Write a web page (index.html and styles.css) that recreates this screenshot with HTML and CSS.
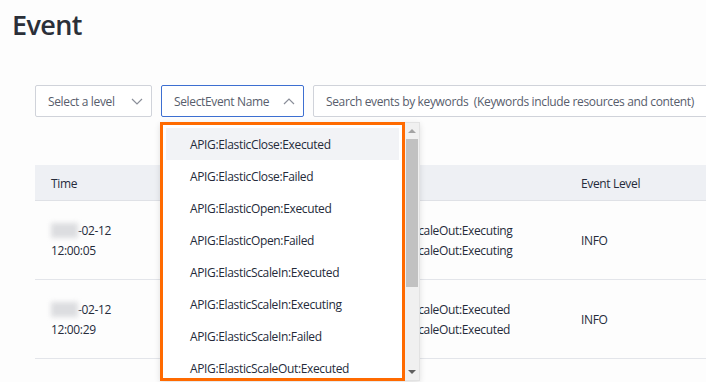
FILE: index.html
```html
<!DOCTYPE html>
<html lang="en">
<head>
    <meta charset="UTF-8">
    <title>Event</title>
    <link rel="stylesheet" href="styles.css">
</head>
<body>
    <div class="page">
        <h1>Event</h1>

        <div class="filters">
            <div class="select level">
                <span>Select a level</span>
                <svg class="chevron" width="12" height="7" viewBox="0 0 12 7"><path d="M1 1 L6 6 L11 1" fill="none" stroke="#8a8e99" stroke-width="1.2"/></svg>
            </div>
            <div class="select name active">
                <span>SelectEvent Name</span>
                <svg class="chevron" width="12" height="7" viewBox="0 0 12 7"><path d="M1 6 L6 1 L11 6" fill="none" stroke="#8a8e99" stroke-width="1.2"/></svg>
            </div>
            <div class="search">Search events by keywords&nbsp; (Keywords include resources and content)</div>
        </div>

        <div class="table">
            <div class="row head">
                <div class="cell">Time</div>
                <div class="cell">Event Name</div>
                <div class="cell">Event Level</div>
            </div>
            <div class="row">
                <div class="cell"><span class="blur"></span>-02-12<br>12:00:05</div>
                <div class="cell">APIG:ElasticScaleOut:Executing<br>APIG:ElasticScaleOut:Executing</div>
                <div class="cell">INFO</div>
            </div>
            <div class="row">
                <div class="cell"><span class="blur"></span>-02-12<br>12:00:29</div>
                <div class="cell">APIG:ElasticScaleOut:Executed<br>APIG:ElasticScaleOut:Executed</div>
                <div class="cell">INFO</div>
            </div>
        </div>
    </div>

    <div class="dropdown">
        <ul class="options">
            <li class="hover">APIG:ElasticClose:Executed</li>
            <li>APIG:ElasticClose:Failed</li>
            <li>APIG:ElasticOpen:Executed</li>
            <li>APIG:ElasticOpen:Failed</li>
            <li>APIG:ElasticScaleIn:Executed</li>
            <li>APIG:ElasticScaleIn:Executing</li>
            <li>APIG:ElasticScaleIn:Failed</li>
            <li>APIG:ElasticScaleOut:Executed</li>
        </ul>
        <div class="scrollbar">
            <span class="arrow up"></span>
            <span class="thumb"></span>
            <span class="arrow down"></span>
        </div>
    </div>
</body>
</html>
```

FILE: styles.css
```css
* {
    box-sizing: border-box;
    margin: 0;
    padding: 0;
}

body {
    background: #fdfdfd;
    color: #252b3a;
    font-family: 'Open Sans', 'Noto Sans', sans-serif;
    font-size: 12px;
    letter-spacing: -0.35px;
    overflow: hidden;
    width: 706px;
    height: 382px;
}

.page {
    padding: 5px 0 0 12px;
}

h1 {
    font-size: 27px;
    font-weight: 600;
    line-height: 40px;
    letter-spacing: -0.6px;
    color: #2b2f38;
    margin-bottom: 40px;
}

.filters {
    display: flex;
    gap: 9px;
    margin-left: 23px;
    height: 32px;
}

.select,
.search {
    display: flex;
    align-items: center;
    border: 1px solid #d0d3da;
    border-radius: 2px;
    background: #fff;
    color: #575d6c;
    padding: 0 12px;
    white-space: nowrap;
}

.select {
    justify-content: space-between;
    padding-right: 8px;
}

.level {
    width: 117px;
    flex: none;
}

.name {
    width: 143px;
    flex: none;
}

.select.active {
    border-color: #3d6fd1;
}

.search {
    width: 400px;
    flex: none;
}

.table {
    margin: 48px 0 0 23px;
}

.row {
    display: grid;
    grid-template-columns: 300px 230px 1fr;
    height: 79px;
    align-items: center;
    border-bottom: 1px solid #e3e5ea;
    line-height: 20px;
}

.row.head {
    height: 36px;
    background: #eef0f4;
    border-bottom-color: #dfe1e6;
}

.cell {
    padding: 2px 0 0 16px;
    white-space: nowrap;
}

.blur {
    display: inline-block;
    width: 27px;
    height: 15px;
    vertical-align: -3px;
    background: #dcdde0;
    filter: blur(2.5px);
}

.dropdown {
    position: absolute;
    left: 160px;
    top: 122px;
    display: flex;
    height: 259px;
    box-shadow: 0 2px 6px rgba(0, 0, 0, 0.12);
}

.options {
    list-style: none;
    width: 245px;
    border: 3px solid #ff6a00;
    padding: 3px 3px 0;
    background: #fff;
    overflow: hidden;
}

.options li {
    height: 32px;
    line-height: 33px;
    padding-left: 24px;
    white-space: nowrap;
}

.options li.hover {
    background: #f2f3f6;
}

.scrollbar {
    width: 15px;
    background: #f0f0f0;
    border: 1px solid #e2e2e2;
    border-left: none;
    display: flex;
    flex-direction: column;
    align-items: center;
}

.arrow {
    width: 0;
    height: 0;
    border-left: 4px solid transparent;
    border-right: 4px solid transparent;
    margin: 6px 0;
}

.arrow.up {
    border-bottom: 4px solid #a3a3a3;
}

.arrow.down {
    border-top: 4px solid #606060;
    margin-top: auto;
}

.thumb {
    width: 12px;
    height: 148px;
    background: #c1c1c1;
}
```
